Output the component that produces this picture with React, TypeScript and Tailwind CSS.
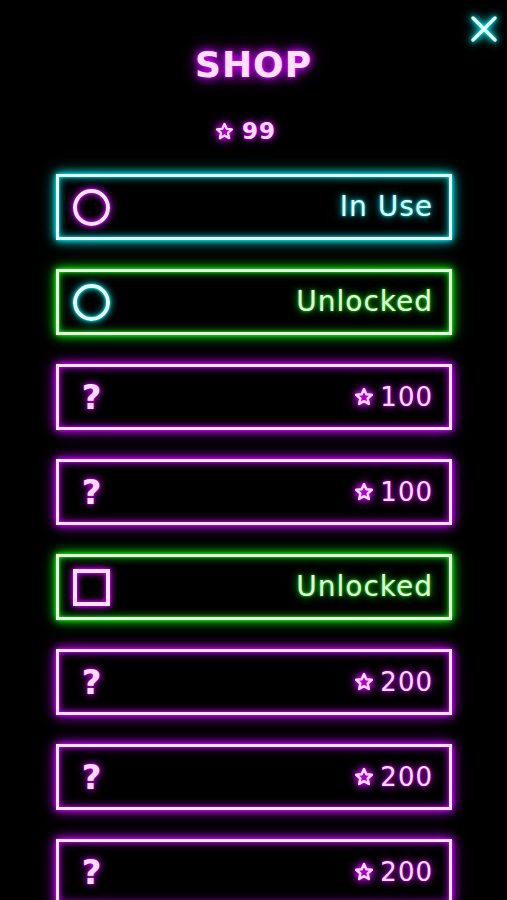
import React from "react";

type Kind = "cyan" | "green" | "magenta";

const Star = ({ size = 18 }: { size?: number }) => (
  <svg
    width={size}
    height={size}
    viewBox="0 0 24 24"
    className="[filter:drop-shadow(0_0_2px_#e600ff)_drop-shadow(0_0_5px_#d000ff)]"
  >
    <polygon
      points="12,2.5 14.8,8.6 21.4,9.3 16.4,13.8 17.8,20.4 12,17 6.2,20.4 7.6,13.8 2.6,9.3 9.2,8.6"
      fill="none"
      stroke="#ffd8ff"
      strokeWidth="3"
      strokeLinejoin="round"
    />
  </svg>
);

const boxStyles: Record<Kind, string> = {
  cyan: "border-[#e8ffff] shadow-[0_0_3px_#00f0f0,0_0_8px_#00e0e0,0_0_14px_#00b0b0,inset_0_0_3px_#00f0f0,inset_0_0_9px_#00c0c0]",
  green:
    "border-[#e6ffe0] shadow-[0_0_3px_#20f020,0_0_8px_#10e010,0_0_14px_#00b000,inset_0_0_3px_#20f020,inset_0_0_9px_#10c010]",
  magenta:
    "border-[#ffe4ff] shadow-[0_0_3px_#e000ff,0_0_8px_#c000f0,0_0_14px_#9000c0,inset_0_0_3px_#e000ff,inset_0_0_9px_#b000e0]",
};

const textStyles: Record<Kind, string> = {
  cyan: "text-[#e0ffff] [text-shadow:0_0_3px_#00f0f0,0_0_8px_#00e0e0]",
  green: "text-[#e4ffdc] [text-shadow:0_0_3px_#20f020,0_0_8px_#10e010]",
  magenta: "text-[#ffdcff] [text-shadow:0_0_3px_#e600ff,0_0_8px_#d000ff]",
};

type Row = {
  box: Kind;
  icon: "circle-m" | "circle-c" | "square" | "q";
  label?: string;
  price?: number;
};

const rows: Row[] = [
  { box: "cyan", icon: "circle-m", label: "In Use" },
  { box: "green", icon: "circle-c", label: "Unlocked" },
  { box: "magenta", icon: "q", price: 100 },
  { box: "magenta", icon: "q", price: 100 },
  { box: "green", icon: "square", label: "Unlocked" },
  { box: "magenta", icon: "q", price: 200 },
  { box: "magenta", icon: "q", price: 200 },
  { box: "magenta", icon: "q", price: 200 },
];

const Icon = ({ icon }: { icon: Row["icon"] }) => {
  if (icon === "circle-m")
    return (
      <div className="w-[37px] h-[37px] rounded-full border-[4px] border-[#ffe0ff] shadow-[0_0_3px_#e600ff,0_0_8px_#d000ff,inset_0_0_3px_#e600ff,inset_0_0_7px_#d000ff]" />
    );
  if (icon === "circle-c")
    return (
      <div className="w-[37px] h-[37px] rounded-full border-[4px] border-[#e0ffff] shadow-[0_0_3px_#00f0f0,0_0_8px_#00e0e0,inset_0_0_3px_#00f0f0,inset_0_0_7px_#00d0d0]" />
    );
  if (icon === "square")
    return (
      <div className="w-[37px] h-[37px] border-[4px] border-[#ffe0ff] shadow-[0_0_3px_#e600ff,0_0_8px_#d000ff,inset_0_0_3px_#e600ff,inset_0_0_7px_#d000ff]" />
    );
  return (
    <span className="w-[37px] flex justify-center text-[34px] leading-none font-bold text-[#ffdcff] [text-shadow:0_0_3px_#e600ff,0_0_8px_#d000ff]">
      ?
    </span>
  );
};

export default function App() {
  return (
    <div className="relative w-full h-[900px] overflow-hidden bg-black [font-family:'DejaVu_Sans',sans-serif]">
      <button className="absolute top-[14px] right-[8px] w-[30px] h-[30px] flex items-center justify-center">
        <svg
          width="28"
          height="28"
          viewBox="0 0 28 28"
          className="[filter:drop-shadow(0_0_2px_#00f0f0)_drop-shadow(0_0_5px_#00e0e0)]"
        >
          <path d="M3 3 L25 25 M25 3 L3 25" stroke="#e0ffff" strokeWidth="3.5" strokeLinecap="round" />
        </svg>
      </button>

      <div className="flex flex-col items-center pt-[45px]">
        <h1 className="text-[36px] leading-[40px] font-bold tracking-[1px] text-[#ffe0ff] [text-shadow:0_0_3px_#e600ff,0_0_8px_#d000ff,0_0_16px_#b000e0]">
          SHOP
        </h1>
        <div className="mt-[34px] pr-[16px] flex items-center gap-[8px] h-[24px]">
          <Star size={19} />
          <span className="text-[23px] tracking-[1px] leading-none font-bold text-[#ffdcff] [text-shadow:0_0_3px_#e600ff,0_0_8px_#d000ff]">
            99
          </span>
        </div>

        <div className="mt-[31px] w-full pl-[56px] pr-[55px] flex flex-col gap-[29px]">
          {rows.map((r, i) => (
            <div
              key={i}
              className={`h-[66px] border-[3px] flex items-center justify-between pl-[14px] pr-[16px] ${boxStyles[r.box]}`}
            >
              <Icon icon={r.icon} />
              {r.label ? (
                <span className={`text-[28px] tracking-[1px] leading-none ${textStyles[r.box]}`}>
                  {r.label}
                </span>
              ) : (
                <div className="flex items-center gap-[6px]">
                  <Star size={20} />
                  <span className={`text-[26px] tracking-[1px] leading-none ${textStyles.magenta}`}>
                    {r.price}
                  </span>
                </div>
              )}
            </div>
          ))}
        </div>
      </div>
    </div>
  );
}
